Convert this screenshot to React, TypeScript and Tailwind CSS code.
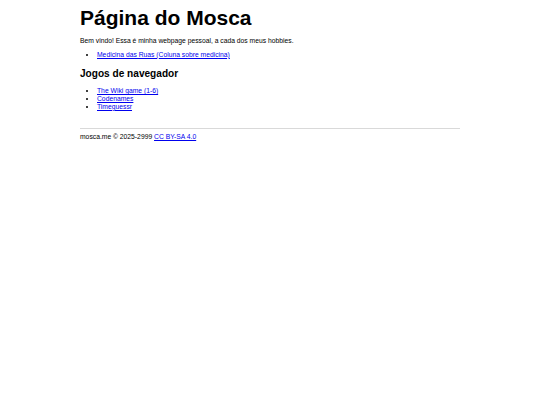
export default function App() {
  return (
    <div className="min-h-[405px] bg-white font-['Liberation_Sans',Arial,sans-serif] text-black">
      <main className="mx-auto w-[380px] pt-[6px] text-[6.75px] leading-[7.8px]">
        <h1 className="text-[21px] font-bold leading-[24px]">Página do Mosca</h1>
        <p className="mt-[7px]">Bem vindo! Essa é minha webpage pessoal, a cada dos meus hobbies.</p>
        <ul className="mt-[6px] list-disc pl-[17px]">
          <li>
            <a href="#" className="text-[#0000ee] underline">Medicina das Ruas (Coluna sobre medicina)</a>
          </li>
        </ul>
        <h2 className="mt-[9px] text-[10.1px] font-bold leading-[11.6px]">Jogos de navegador</h2>
        <ul className="mt-[8px] list-disc pl-[17px]">
          <li>
            <a href="#" className="text-[#0000ee] underline">The Wiki game (1-6)</a>
          </li>
          <li>
            <a href="#" className="text-[#0000ee] underline">Codenames</a>
          </li>
          <li>
            <a href="#" className="text-[#0000ee] underline">Timeguessr</a>
          </li>
        </ul>
        <footer className="mt-[17px] border-t border-[#d9d9d9] pt-[4px]">
          mosca.me © 2025-2999{' '}
          <a href="#" className="text-[#0000ee] underline">CC BY-SA 4.0</a>
        </footer>
      </main>
    </div>
  );
}
